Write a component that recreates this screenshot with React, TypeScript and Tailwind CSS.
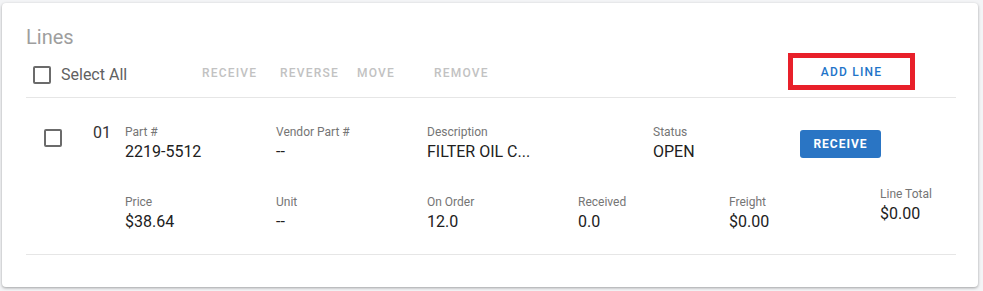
import React from "react";

const label = "text-[12px] leading-[16px] text-[#757575]";
const value = "text-[16px] leading-[24px] text-[#212121]";

function Box({ className = "" }: { className?: string }) {
  return <div className={`w-[18px] h-[18px] rounded-[2px] border-2 border-[#6b6b6b] ${className}`} />;
}

function Field({ name, val, width }: { name: string; val: string; width: string }) {
  return (
    <div className={`${width} flex flex-col`}>
      <span className={label}>{name}</span>
      <span className={value}>{val}</span>
    </div>
  );
}

export default function App() {
  const tools = [
    { text: "RECEIVE", w: "w-[78px]" },
    { text: "REVERSE", w: "w-[77px]" },
    { text: "MOVE", w: "w-[77px]" },
    { text: "REMOVE", w: "w-[70px]" },
  ];

  return (
    <div className="w-[983px] h-[291px] bg-[#f3f4f6] pt-[3px] pl-[2px] font-['Roboto',sans-serif]">
      <div className="w-[976px] h-[284px] bg-white rounded-[4px] shadow-[0_1px_3px_rgba(0,0,0,0.35)] pt-[22px] pl-[24px] pr-[22px]">
        <h2 className="text-[20px] leading-[24px] text-[#9e9e9e]">Lines</h2>

        {/* toolbar */}
        <div className="flex items-center h-[46px] mt-[3px] border-b border-[#e6e6e6]">
          <div className="w-[176px] flex items-center pl-[7px]">
            <Box />
            <span className="ml-[10px] text-[16px] text-[#616161]">Select All</span>
          </div>
          {tools.map((t) => (
            <span key={t.text} className={`${t.w} text-[12px] font-medium tracking-[1.2px] text-[#c2c2c2] -mt-[4px]`}>
              {t.text}
            </span>
          ))}
          <div className="ml-auto mr-[41px] -mt-[6px] w-[127px] h-[37px] border-[5px] border-[#e8202a] flex items-center justify-center">
            <span className="text-[12px] font-medium tracking-[1.2px] text-[#1e74c9]">ADD LINE</span>
          </div>
        </div>

        {/* line */}
        <div className="pt-[26px] pb-[20px] border-b border-[#e6e6e6]">
          <div className="flex items-start">
            <div className="w-[67px] pl-[18px] pt-[5px]">
              <Box />
            </div>
            <span className="w-[32px] text-[16px] leading-[16px] text-[#333] pt-[1px]">01</span>
            <Field name="Part #" val="2219-5512" width="w-[151px]" />
            <Field name="Vendor Part #" val="--" width="w-[151px]" />
            <Field name="Description" val="FILTER OIL C..." width="w-[226px]" />
            <Field name="Status" val="OPEN" width="w-[147px]" />
            <button className="mt-[6px] w-[81px] h-[28px] rounded-[3px] bg-[#2a75c4] text-white text-[12px] font-bold tracking-[1px]">
              RECEIVE
            </button>
          </div>
          <div className="flex items-start mt-[30px]">
            <div className="w-[99px]" />
            <Field name="Price" val="$38.64" width="w-[151px]" />
            <Field name="Unit" val="--" width="w-[151px]" />
            <Field name="On Order" val="12.0" width="w-[151px]" />
            <Field name="Received" val="0.0" width="w-[151px]" />
            <Field name="Freight" val="$0.00" width="w-[151px]" />
            <div className="-mt-[8px]">
              <Field name="Line Total" val="$0.00" width="w-[76px]" />
            </div>
          </div>
        </div>
      </div>
    </div>
  );
}
